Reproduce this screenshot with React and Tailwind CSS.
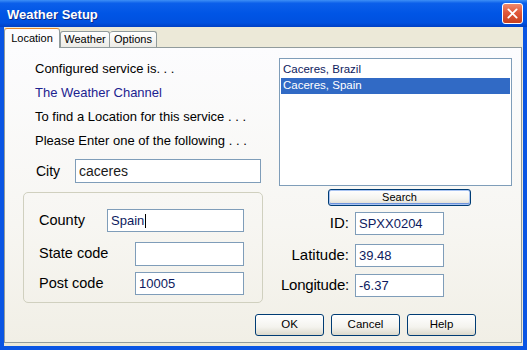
const inputBox = "bg-white border border-[#7f9db9] flex items-center pl-[3px] text-[13px]";
const xpButton =
  "flex items-center justify-center border border-[#003c74] rounded-[3px] bg-[linear-gradient(to_bottom,#ffffff_0%,#f4f3ee_60%,#dcd9cc_100%)] text-black";

function TextBox({ w, h, value, color = "text-[#0d1a5e]", caret = false, size = "text-[13px]" }) {
  return (
    <div className={`${inputBox} ${w} ${h} ${color} ${size}`}>
      <span>{value}</span>
      {caret && <span className="w-[1px] h-[14px] bg-black ml-[1px]" />}
    </div>
  );
}

function CloseButton() {
  return (
    <div className="w-[21px] h-[21px] mr-[4px] rounded-[3px] border border-white bg-[linear-gradient(to_bottom,#f08a6c_0%,#e0583a_45%,#c7401f_100%)] flex items-center justify-center">
      <svg viewBox="0 0 12 12" className="w-[11px] h-[11px]">
        <path d="M1.5 1.5 L10.5 10.5 M10.5 1.5 L1.5 10.5" stroke="white" strokeWidth="2" strokeLinecap="round" />
      </svg>
    </div>
  );
}

export default function App() {
  return (
    <div className="w-[527px] h-[350px] bg-[#0a55e3] flex flex-col font-['Liberation_Sans',Arial,sans-serif] text-black overflow-hidden">
      {/* title bar */}
      <div className="h-[27px] shrink-0 flex items-center justify-between bg-[linear-gradient(to_bottom,#3d8ff6_0%,#0b5fea_12%,#0055e5_50%,#0050df_85%,#0040c4_100%)]">
        <span className="pl-[7px] pt-[2px] text-white font-bold text-[13px] [text-shadow:1px_1px_0_#0a2a8a]">
          Weather Setup
        </span>
        <CloseButton />
      </div>

      {/* dialog body */}
      <div className="flex-1 mx-[4px] mb-[4px] bg-[#ece9d8] flex flex-col">
        <div className="h-[20px] pt-[1px] flex items-end text-[11px]">
          <div className="relative z-10 w-[56px] h-[20px] -mb-[1px] border border-b-0 border-[#919b9c] border-t-[#e68b2c] rounded-t-[3px] bg-[#fcfcfe] flex items-center justify-center pb-[1px]">
            Location
          </div>
          <div className="w-[50px] h-[16px] border border-b-0 border-[#919b9c] rounded-t-[3px] bg-[linear-gradient(to_bottom,#ffffff,#ecebe6)] flex items-center justify-center">
            Weather
          </div>
          <div className="w-[47px] h-[16px] border border-b-0 border-l-0 border-[#919b9c] rounded-t-[3px] bg-[linear-gradient(to_bottom,#ffffff,#ecebe6)] flex items-center justify-center">
            Options
          </div>
        </div>

        <div className="mr-[1px] mb-[3px] h-[296px] border border-[#919b9c] bg-[linear-gradient(to_bottom,#fcfcfe_0%,#f7f6f2_60%,#f1efe6_100%)] flex flex-col">
          <div className="flex pl-[18px]">
            {/* left column */}
            <div className="w-[240px] pt-[9px] flex flex-col">
              <div className="pl-[12px] text-[13px]">
                <div className="h-[24px] flex items-center">Configured service is. . .</div>
                <div className="h-[24px] flex items-center text-[#1c2390]">The Weather Channel</div>
                <div className="h-[24px] flex items-center">To find a Location for this service . . .</div>
                <div className="h-[24px] flex items-center">Please Enter one of the following . . .</div>
              </div>
              <div className="mt-[6px] pl-[13px] flex items-center">
                <span className="w-[39px] text-[14px]">City</span>
                <TextBox w="w-[186px]" h="h-[24px]" value="caceres" color="text-[#1a1a1a]" size="text-[14px]" />
              </div>
              <div className="mt-[9px] h-[111px] border border-[#d0d0bf] rounded-[5px] pt-[16px] pl-[15px] flex flex-col text-[14.5px]">
                <div className="flex items-center">
                  <span className="w-[68px]">County</span>
                  <TextBox w="w-[137px]" h="h-[23px]" value="Spain" caret />
                </div>
                <div className="mt-[10px] flex items-center">
                  <span className="w-[96px]">State code</span>
                  <TextBox w="w-[109px]" h="h-[24px]" value="" />
                </div>
                <div className="mt-[6px] flex items-center">
                  <span className="w-[96px]">Post code</span>
                  <TextBox w="w-[109px]" h="h-[23px]" value="10005" />
                </div>
              </div>
            </div>

            {/* right column */}
            <div className="ml-[16px] w-[233px] pt-[10px] flex flex-col">
              <div className="h-[128px] bg-white border border-[#7f9db9] pt-[3px] px-[1px] text-[11.5px]">
                <div className="h-[16px] flex items-center pl-[2px] text-[#0d1a5e]">Caceres, Brazil</div>
                <div className="h-[16px] flex items-center pl-[2px] bg-[#316ac5] text-white">Caceres, Spain</div>
              </div>
              <div
                className={`${xpButton} mt-[3px] ml-[49px] w-[143px] h-[17px] text-[11px] shadow-[inset_0_0_0_1px_#a9c4f2,inset_0_-1px_0_1px_#6d93dc]`}
              >
                Search
              </div>
              <div className="mt-[6px] flex items-center">
                <span className="w-[70px] text-right text-[15px]">ID:</span>
                <div className="ml-[6px]">
                  <TextBox w="w-[89px]" h="h-[23px]" value="SPXX0204" />
                </div>
              </div>
              <div className="mt-[9px] flex items-center">
                <span className="w-[70px] text-right text-[15px]">Latitude:</span>
                <div className="ml-[6px]">
                  <TextBox w="w-[89px]" h="h-[23px]" value="39.48" />
                </div>
              </div>
              <div className="mt-[7px] flex items-center">
                <span className="w-[70px] text-right text-[15px] tracking-[-0.2px]">Longitude:</span>
                <div className="ml-[6px]">
                  <TextBox w="w-[89px]" h="h-[23px]" value="-6.37" />
                </div>
              </div>
            </div>
          </div>

          {/* dialog buttons */}
          <div className="mt-[11px] pr-[45px] flex justify-end gap-[7px] text-[11.5px]">
            <div className={`${xpButton} w-[69px] h-[22px]`}>OK</div>
            <div className={`${xpButton} w-[69px] h-[22px]`}>Cancel</div>
            <div className={`${xpButton} w-[69px] h-[22px]`}>Help</div>
          </div>
        </div>
      </div>
    </div>
  );
}
